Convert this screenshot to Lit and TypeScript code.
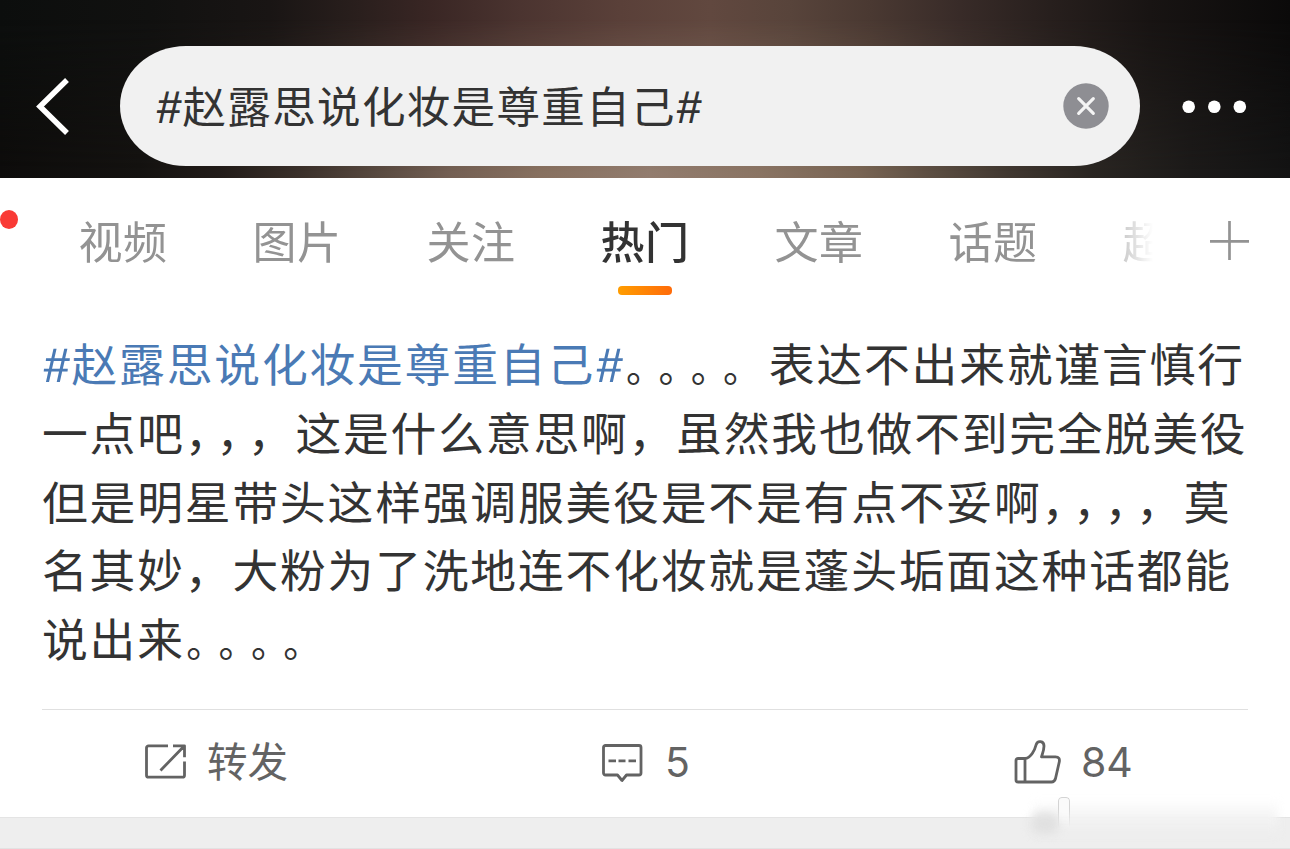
import { LitElement, html, css } from "lit";
import { customElement } from "lit/decorators.js";
import { classMap } from "lit/directives/class-map.js";

type Segment = { text: string; kind: "text" | "topic" | "stops" | "commas" };
const t = (text: string): Segment => ({ text, kind: "text" });
const stops = (text: string): Segment => ({ text, kind: "stops" });
const commas = (text: string): Segment => ({ text, kind: "commas" });

const TOPIC = "赵露思说化妆是尊重自己";

const LINES: Segment[][] = [
  [{ text: TOPIC, kind: "topic" }, stops("。。。。"), t("表达不出来就谨言慎行")],
  [t("一点吧"), commas("，，"), t("，这是什么意思啊，虽然我也做不到完全脱美役")],
  [t("但是明星带头这样强调服美役是不是有点不妥啊"), commas("，，，"), t("，莫")],
  [t("名其妙，大粉为了洗地连不化妆就是蓬头垢面这种话都能")],
  [t("说出来"), stops("。。。。")],
];

const TABS = ["视频", "图片", "关注", "热门", "文章", "话题", "超话"];

@customElement("search-header")
class SearchHeader extends LitElement {
  static styles = css`
    :host {
      display: flex;
      position: relative;
      align-items: flex-start;
      height: 178px;
      box-sizing: border-box;
      padding-top: 46px;
      background: linear-gradient(90deg, #0c0e0d 0, #111110 150px, #191514 270px, #281e1c 350px, #392624 430px, #4b3430 520px, #5a4039 620px, #61483f 710px, #58443b 790px, #4a3932 870px, #382b28 960px, #271f1d 1050px, #181413 1150px, #0b0a0a 1290px);
    }
    :host::before {
      content: "";
      position: absolute;
      inset: 0;
      background: linear-gradient(90deg, #0d0c0b 0, #141210 140px, #221c19 220px, #3a302a 300px, #594a40 380px, #735f53 450px, #87705f 540px, #927c6e 650px, #8a7463 760px, #786453 860px, #5c4e42 930px, #403730 1010px, #2a2622 1090px, #1c1a19 1190px, #131313 1290px);
      -webkit-mask-image: linear-gradient(transparent 20px, #000 172px);
      mask-image: linear-gradient(transparent 20px, #000 172px);
    }
    .back, .field, .more { position: relative; }
    .back { width: 120px; height: 120px; }
    .field {
      display: flex;
      align-items: center;
      width: 1020px;
      height: 120px;
      box-sizing: border-box;
      padding: 0 31px 0 36px;
      border-radius: 66px / 60px;
      background: #f1f1f1;
    }
    .query {
      flex: 1;
      display: flex;
      padding-bottom: 3px;
      font: 43.5px/60px "Noto Sans CJK SC", sans-serif;
      letter-spacing: 1.35px;
      color: #333;
      white-space: nowrap;
    }
    .hash { display: inline-block; width: 26.5px; text-align: center; letter-spacing: 0; transform: skewX(-5deg) scaleX(1.13); }
    .more { width: 150px; height: 120px; }
    svg { display: block; flex: none; }
  `;
  render() {
    return html`
      <svg class="back" viewBox="0 0 120 120"><path d="M67 34 40 60.5 67 87" fill="none" stroke="#fff" stroke-width="5.5"/></svg>
      <div class="field">
        <div class="query"><span class="hash">#</span><span>${TOPIC}</span><span class="hash">#</span></div>
        <svg width="46" height="46" viewBox="0 0 46 46">
          <circle cx="23" cy="23" r="22.7" fill="#8e8e93"/>
          <path d="m15.700 15.700 14.600 14.600m0-14.600-14.600 14.600" stroke="#f4f4f4" stroke-width="3.2" stroke-linecap="round"/>
        </svg>
      </div>
      <svg class="more" viewBox="0 0 150 120" fill="#fff">
        <circle cx="48.7" cy="60.7" r="6.3"/><circle cx="74.3" cy="60.7" r="6.3"/><circle cx="99.8" cy="60.7" r="6.3"/>
      </svg>
    `;
  }
}

@customElement("tab-strip")
class TabStrip extends LitElement {
  static styles = css`
    :host { display: flex; position: relative; height: 137px; background: #fff; }
    .dot { position: absolute; left: 0; top: 32px; width: 18px; height: 19px; border-radius: 50%; background: #f93a35; }
    .tabs {
      display: flex;
      flex: none;
      width: 1254px;
      padding-left: 36px;
      box-sizing: border-box;
      -webkit-mask-image: linear-gradient(90deg, #000 1090px, transparent 1153px);
      mask-image: linear-gradient(90deg, #000 1090px, transparent 1153px);
    }
    .tab {
      flex: none;
      width: 174px;
      display: flex;
      flex-direction: column;
      align-items: center;
      padding-top: 32px;
      box-sizing: border-box;
      font: 44px/60px "Noto Sans CJK SC", sans-serif;
      letter-spacing: 0.5px;
      color: #939393;
    }
    .active { color: #333; font-weight: 500; }
    .bar { width: 54px; height: 9px; margin-top: 16px; border-radius: 4px; background: linear-gradient(90deg, #ff9d00, #ff6b0a); }
    .add { display: block; flex: none; margin: 43px 0 0 -44px; }
  `;
  render() {
    return html`
      <span class="dot"></span>
      <div class="tabs">
        ${TABS.map((name) => {
          const active = name === "热门";
          return html`<div class=${classMap({ tab: true, active })}><span>${name}</span>${active ? html`<span class="bar"></span>` : ""}</div>`;
        })}
      </div>
      <svg class="add" width="40" height="40" viewBox="0 0 40 40"><path d="M19.5 0v39M0 20.3h39" stroke="#939393" stroke-width="2.7"/></svg>
    `;
  }
}

@customElement("post-body")
class PostBody extends LitElement {
  static styles = css`
    :host {
      display: block;
      height: 395px;
      box-sizing: border-box;
      margin: 0 42px;
      padding-top: 13px;
      border-bottom: 1px solid #e0e0e0;
      font: 45.8px/68.8px "Noto Sans CJK SC", sans-serif;
      letter-spacing: 1.8px;
      color: #333;
      white-space: nowrap;
      text-spacing-trim: space-all;
    }
    .line { height: 68.8px; }
    .topic { color: #4a7ab5; }
    .hash { display: inline-block; width: 29.5px; text-align: center; letter-spacing: 0; transform: skewX(-5deg) scaleX(1.13); }
    .stops { font-size: 38px; line-height: 1; letter-spacing: -5.7px; padding-left: 1.500px; margin-right: 13.500px; }
    .commas { letter-spacing: -14.3px; }
  `;
  render() {
    return html`${LINES.map(
      (line) => html`<div class="line">${line.map((s) =>
        s.kind === "topic"
          ? html`<span class="topic"><span class="hash">#</span>${s.text}<span class="hash">#</span></span>`
          : html`<span class=${s.kind}>${s.text}</span>`
      )}</div>`
    )}`;
  }
}

@customElement("post-actions")
class PostActions extends LitElement {
  static styles = css`
    :host { display: grid; grid-template-columns: 430px 430px 430px; height: 107px; color: #636363; }
    .action { display: flex; align-items: flex-start; }
    .share { padding-left: 143px; }
    .comment { padding-left: 170px; }
    .like { padding-left: 154px; }
    svg { display: block; flex: none; margin-top: 28px; fill: none; stroke: #636363; stroke-width: 2.8; stroke-linejoin: round; }
    .label { padding: 20px 0 0 20px; font: 40.5px/60px "Noto Sans CJK SC", sans-serif; }
    .count { padding: 22px 0 0 20px; font: 41px/60px Inter, sans-serif; }
  `;
  render() {
    return html`
      <div class="action share">
        <svg width="44" height="50" viewBox="0 0 44 50">
          <path d="M25 7.800H5.500a2 2 0 0 0-2 2v27.400a2 2 0 0 0 2 2h34a2 2 0 0 0 2-2V23.500M30 7.800h11.500v11.500M41 8.200 17.500 32.500"/>
        </svg>
        <span class="label">转发</span>
      </div>
      <div class="action comment">
        <svg width="45" height="50" viewBox="0 0 45 50">
          <path d="M5.500 7.500h33.500a2 2 0 0 1 2 2V35a2 2 0 0 1-2 2H26.500L22 42.500 17.500 37h-12a2 2 0 0 1-2-2V9.500a2 2 0 0 1 2-2Z"/>
          <path d="M8.500 22.800h7.500m2.500 0h7m3 0H36"/>
        </svg>
        <span class="count">5</span>
      </div>
      <div class="action like">
        <svg width="47" height="50" viewBox="0 0 47 50">
          <path d="M4 44a2 2 0 0 1-2-2V22.500a2 2 0 0 1 2-2h7.500C17 19.500 20.800 12 22.200 6.500c1.300-4.300 7.800-3.700 7.800 1.500 0 4-1.500 7.500-2.500 10.800H41.500c3.300 0 4.500 2 3.700 5.500L41.500 40.500c-.7 2.300-1.700 3.500-4 3.500ZM11 20.500V44"/>
        </svg>
        <span class="count">84</span>
      </div>
    `;
  }
}

@customElement("app-root")
class AppRoot extends LitElement {
  static styles = css`
    :host { display: block; position: relative; width: 1290px; height: 849px; overflow: hidden; background: #fff; }
    .gap { height: 32px; box-sizing: border-box; background: #eee; border-top: 1px solid #e4e4e4; border-bottom: 1px solid #e2e2e2; }
    .haze { position: absolute; left: 1034px; top: 800px; width: 244px; height: 34px; background: linear-gradient(#fff0, #f4f4f4 50%, #ededed); filter: blur(4px); }
    .smudge { position: absolute; left: 1031px; top: 813px; width: 28px; height: 21px; border-radius: 9px; background: #e0e0e0; filter: blur(5px); }
    .stem { position: absolute; left: 1058px; top: 797px; width: 12px; height: 30px; box-sizing: border-box; border: 1.5px solid #d4d4d4; border-bottom: 0; border-radius: 4px 4px 0 0; background: #fafafa; filter: blur(0.6px); -webkit-mask-image: linear-gradient(#000 40%, transparent); mask-image: linear-gradient(#000 40%, transparent); }
  `;
  render() {
    return html`
      <search-header></search-header>
      <tab-strip></tab-strip>
      <post-body></post-body>
      <post-actions></post-actions>
      <div class="gap"></div>
      <div class="haze"></div>
      <div class="smudge"></div>
      <div class="stem"></div>
    `;
  }
}
